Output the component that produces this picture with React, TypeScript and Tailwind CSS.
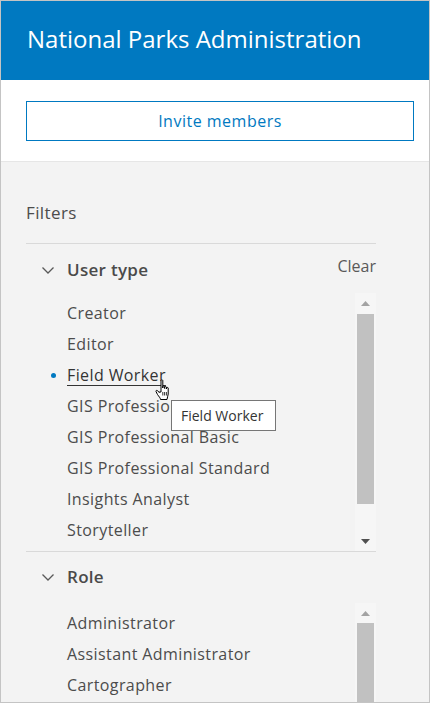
import React from 'react';

const userTypes = [
    'Creator',
    'Editor',
    'Field Worker',
    'GIS Professional Advanced',
    'GIS Professional Basic',
    'GIS Professional Standard',
    'Insights Analyst',
    'Storyteller',
];

const roles = ['Administrator', 'Assistant Administrator', 'Cartographer', 'Data Editor', 'Publisher', 'User', 'Viewer', 'Reviewer'];

const Chevron = () => (
    <svg width="14" height="10" viewBox="0 0 14 10" className="shrink-0">
        <path d="M1.5 2.5 L7 8 L12.5 2.5" fill="none" stroke="#595959" strokeWidth="1.3" />
    </svg>
);

// Fake scrollbar, drawn like the old Windows one
const Scrollbar = ({ thumbTop, thumbHeight }: { thumbTop: number; thumbHeight: number }) => (
    <div className="w-[21px] shrink-0 bg-[#f6f6f6] relative flex flex-col items-center">
        <div className="h-[20px] flex items-center justify-center">
            <svg width="9" height="5" viewBox="0 0 9 5">
                <path d="M0 5 L4.5 0 L9 5 Z" fill="#a3a3a3" />
            </svg>
        </div>
        <div
            className="w-[17px] bg-[#c1c1c1] absolute left-[2px]"
            style={{ top: thumbTop, height: thumbHeight }}
        ></div>
        <div className="mt-auto h-[20px] flex items-center justify-center">
            <svg width="9" height="5" viewBox="0 0 9 5">
                <path d="M0 0 L9 0 L4.5 5 Z" fill="#505050" />
            </svg>
        </div>
    </div>
);

const HandCursor = () => (
    <svg width="18" height="22" viewBox="0 0 18 22" className="absolute left-[154px] top-[378px]">
        <path
            d="M6 1.5 C6 0.7 7.8 0.7 7.8 1.5 L7.8 9 L7.8 7.5 C7.8 6.7 9.6 6.7 9.6 7.5 L9.6 9.5 L9.6 8.2 C9.6 7.4 11.4 7.4 11.4 8.2 L11.4 10 L11.4 9 C11.4 8.2 13.2 8.2 13.2 9 L13.2 15 C13.2 17 12 18.5 12 20.5 L5.5 20.5 C5.5 19 3.8 17.5 2.5 15.5 L1 12.5 C0.6 11.7 1.8 10.8 2.6 11.7 L4.2 13.5 L4.2 13 L6 13 Z"
            fill="#ffffff"
            stroke="#000000"
            strokeWidth="1"
            strokeLinejoin="round"
        />
        <path d="M7.8 13 L7.8 16.5 M9.6 13 L9.6 16.5 M11.4 13 L11.4 16.5" stroke="#000" strokeWidth="0.8" />
    </svg>
);

export default function App() {
    return (
        <div
            className="w-[430px] h-[703px] border border-[#c4c4c4] bg-[#f3f3f3] overflow-hidden relative"
            style={{ fontFamily: '"Open Sans", Lato, sans-serif' }}
        >
            {/* Header */}
            <div className="h-[79px] bg-[#0079c1] flex items-center px-[26px] pb-[3px]">
                <h1 className="text-white text-[24px] font-normal leading-none">National Parks Administration</h1>
            </div>

            {/* Invite */}
            <div className="h-[82px] bg-white pl-[25px] pr-[15px] pt-[21px] border-b border-[#e6e6e6]">
                <button className="w-full h-[40px] border border-[#0079c1] text-[#0079c1] text-[16px] tracking-[0.5px] bg-white">
                    Invite members
                </button>
            </div>

            {/* Filters */}
            <div className="px-[25px] pr-[53px]">
                <div className="pt-[39px] pb-[18px] text-[17px] tracking-[0.4px] text-[#4c4c4c] leading-[24px]">Filters</div>

                {/* User type */}
                <div className="border-t border-[#d9d9d9]">
                    <div className="flex items-center h-[49px] pl-[15px] pt-[2px]">
                        <Chevron />
                        <span className="ml-[12px] text-[17px] font-semibold tracking-[0.3px] text-[#4a4a4a]">User type</span>
                        <span className="ml-auto text-[16px] text-[#595959] -mt-[8px]">Clear</span>
                    </div>
                    <div className="flex h-[258px]">
                        <ul className="flex-1 pl-[41px] pt-[5px] text-[16px] tracking-[0.4px] text-[#4c4c4c]">
                            {userTypes.map((t) => (
                                <li key={t} className="h-[31px] leading-[31px] relative whitespace-nowrap">
                                    {t === 'Field Worker' ? (
                                        <>
                                            <span className="absolute -left-[16px] top-[13px] w-[5px] h-[5px] rounded-full bg-[#0079c1]"></span>
                                            <span className="text-[#333] underline underline-offset-[4px] decoration-[1px] pr-[8px]">Field Worker</span>
                                        </>
                                    ) : (
                                        t
                                    )}
                                </li>
                            ))}
                        </ul>
                        <Scrollbar thumbTop={21} thumbHeight={190} />
                    </div>
                </div>

                {/* Role */}
                <div className="border-t border-[#d9d9d9]">
                    <div className="flex items-center h-[51px] pl-[15px] pb-[2px]">
                        <Chevron />
                        <span className="ml-[12px] text-[17px] font-semibold tracking-[0.3px] text-[#4a4a4a]">Role</span>
                    </div>
                    <div className="flex h-[258px]">
                        <ul className="flex-1 pl-[41px] pt-[5px] text-[16px] tracking-[0.4px] text-[#4c4c4c]">
                            {roles.map((r) => (
                                <li key={r} className="h-[31px] leading-[31px] whitespace-nowrap">{r}</li>
                            ))}
                        </ul>
                        <Scrollbar thumbTop={20} thumbHeight={190} />
                    </div>
                </div>
            </div>

            {/* Tooltip */}
            <div className="absolute left-[170px] top-[399px] w-[105px] h-[31px] bg-white border border-[#767676] text-[14px] text-[#333] flex items-center pl-[9px] whitespace-nowrap">
                Field Worker
            </div>
            <HandCursor />
        </div>
    );
}
